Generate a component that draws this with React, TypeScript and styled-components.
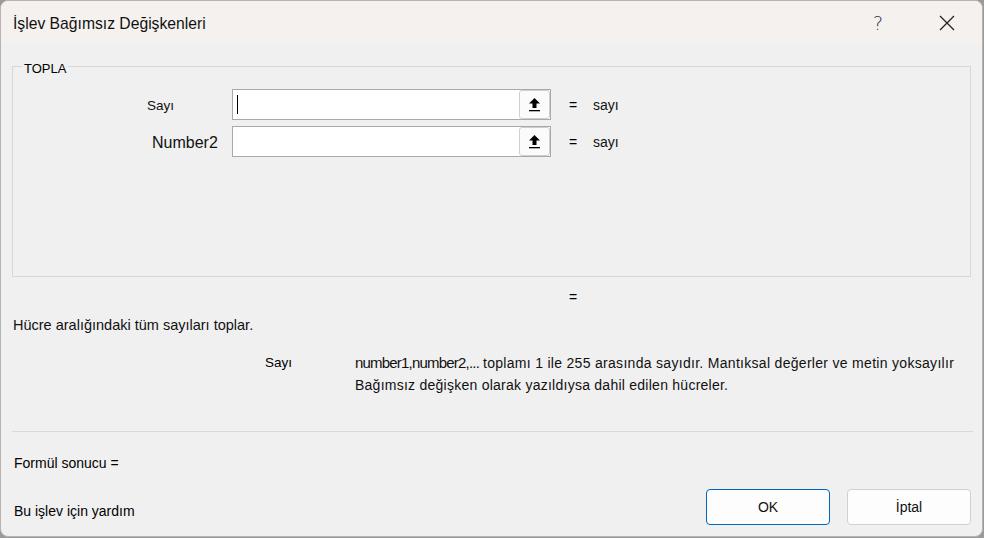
import React from "react";
import styled, { createGlobalStyle } from "styled-components";

const Global = createGlobalStyle`
  html, body { margin: 0; padding: 0; background: #9a9a9a; }
  body { width: 984px; height: 538px; overflow: hidden; font-family: "Liberation Sans", Arial, sans-serif; color: #000; }
  * { box-sizing: border-box; }
`;

const Dialog = styled.div`
  width: 983px;
  height: 537px;
  border: 1px solid #b4b4b4;
  border-radius: 8px;
  overflow: hidden;
  background: #f0f0f0;
  display: flex;
  flex-direction: column;
`;

const TitleBar = styled.div`
  height: 43px;
  flex: none;
  background: #f5f1ef;
  display: flex;
  align-items: center;
  padding-left: 12px;
`;

const Title = styled.div`
  font-size: 15.7px;
  color: #111;
  flex: 1;
  padding-top: 2px;
`;

const TitleButton = styled.div<{ $w: number }>`
  width: ${(p) => p.$w}px;
  height: 43px;
  display: flex;
  align-items: center;
  justify-content: center;
  color: #222;
`;

const Question = styled.span`
  font-family: "DejaVu Sans", sans-serif;
  font-weight: 300;
  font-size: 19px;
  color: #333;
  margin-right: 8px;
`;

const Body = styled.div`
  flex: 1;
  display: flex;
  flex-direction: column;
  padding: 0 11px 0 11px;
`;

const Group = styled.div`
  position: relative;
  margin-top: 22px;
  height: 211px;
  flex: none;
  border: 1px solid #d7d7d7;
  padding-top: 22px;
  display: flex;
  flex-direction: column;
  gap: 6px;
`;

const Legend = styled.span`
  position: absolute;
  top: -5px;
  left: 9px;
  padding: 0 2px;
  background: #f0f0f0;
  font-size: 13px;
  line-height: 13px;
`;

const ArgRow = styled.div`
  display: grid;
  grid-template-columns: 219px 319px 42px auto;
  align-items: center;
  height: 31px;
`;

const ArgLabel = styled.div<{ $pad: number; $size: number; $dy: number }>`
  padding-left: ${(p) => p.$pad}px;
  padding-top: ${(p) => p.$dy}px;
  font-size: ${(p) => p.$size}px;
  color: #111;
`;

const InputBox = styled.div`
  height: 31px;
  border: 1px solid #a9a9a9;
  background: #fff;
  display: flex;
  align-items: stretch;
  padding-left: 4px;
`;

const Field = styled.div`
  flex: 1;
  display: flex;
  align-items: center;
`;

const Caret = styled.div`
  width: 1px;
  height: 19px;
  background: #000;
`;

const RefButton = styled.div`
  width: 31px;
  border: 1px solid #cfcfcf;
  border-radius: 3px;
  background: #fbfbfb;
  display: flex;
  align-items: center;
  justify-content: center;
`;

const Eq = styled.div`
  font-size: 14px;
  padding-left: 18px;
`;

const Value = styled.div`
  font-size: 14px;
  color: #111;
`;

const EqRow = styled.div`
  height: 40px;
  flex: none;
  display: flex;
  align-items: center;
  padding-left: 557px;
  font-size: 14px;
`;

const Desc = styled.div`
  height: 16px;
  line-height: 16px;
  font-size: 14.5px;
  color: #111;
  padding-left: 1px;
`;

const ArgHelp = styled.div`
  margin-top: 19px;
  display: grid;
  grid-template-columns: 343px 1fr;
  line-height: 22px;
`;

const HelpLabel = styled.div`
  padding-left: 253px;
  font-size: 13.5px;
`;

const HelpText = styled.div`
  font-size: 14px;
  color: #111;
`;

const Piece = styled.span<{ $ls: number; $size?: number }>`
  letter-spacing: ${(p) => p.$ls}px;
  font-size: ${(p) => p.$size ?? 14}px;
`;

const Separator = styled.div`
  margin-top: 35px;
  height: 1px;
  flex: none;
  background: #d9d9d9;
  margin-right: -2px;
`;

const FormulaResult = styled.div`
  margin-top: 23px;
  height: 16px;
  line-height: 16px;
  font-size: 14px;
  padding-left: 2px;
`;

const Footer = styled.div`
  margin-top: 18px;
  display: flex;
  align-items: flex-start;
  gap: 17px;
`;

const HelpLink = styled.div`
  flex: 1;
  margin-top: 14px;
  line-height: 16px;
  font-size: 14px;
  padding-left: 2px;
`;

const Button = styled.button<{ $primary?: boolean }>`
  width: 124px;
  height: 36px;
  border: 1px solid ${(p) => (p.$primary ? "#0067c0" : "#d0d0d0")};
  border-radius: 4px;
  background: #fdfdfd;
  font-family: "Liberation Sans", Arial, sans-serif;
  font-size: 14px;
  color: #111;
  padding: 0;
`;

const RefIcon = () => (
  <svg width="13" height="15" viewBox="0 0 13 15">
    <path d="M6.5 1 L12 6.5 L8.5 6.5 L8.5 11 L4.5 11 L4.5 6.5 L1 6.5 Z" fill="#000" />
    <rect x="1" y="13" width="11" height="1.3" fill="#000" />
  </svg>
);

const CloseIcon = () => (
  <svg width="16" height="16" viewBox="0 0 16 16">
    <path d="M1 1 L15 15 M15 1 L1 15" stroke="#222" strokeWidth="1.3" />
  </svg>
);

const args = [
  { label: "Sayı", pad: 134, size: 13.5, dy: 1, caret: true },
  { label: "Number2", pad: 139, size: 16, dy: 3, caret: false },
];

export default function App() {
  return (
    <>
      <Global />
      <Dialog>
        <TitleBar>
          <Title>İşlev Bağımsız Değişkenleri</Title>
          <TitleButton $w={60}>
            <Question>?</Question>
          </TitleButton>
          <TitleButton $w={70}>
            <CloseIcon />
          </TitleButton>
        </TitleBar>
        <Body>
          <Group>
            <Legend>TOPLA</Legend>
            {args.map((a) => (
              <ArgRow key={a.label}>
                <ArgLabel $pad={a.pad} $size={a.size} $dy={a.dy}>
                  {a.label}
                </ArgLabel>
                <InputBox>
                  <Field>{a.caret && <Caret />}</Field>
                  <RefButton>
                    <RefIcon />
                  </RefButton>
                </InputBox>
                <Eq>=</Eq>
                <Value>sayı</Value>
              </ArgRow>
            ))}
          </Group>
          <EqRow>=</EqRow>
          <Desc>Hücre aralığındaki tüm sayıları toplar.</Desc>
          <ArgHelp>
            <HelpLabel>Sayı</HelpLabel>
            <HelpText>
              <Piece $ls={-0.8} $size={15}>number1,number2,...</Piece>{" "}
              <Piece $ls={0.3}>toplamı 1 ile 255 arasında sayıdır. Mantıksal değerler ve metin yoksayılır</Piece>
              <br />
              <Piece $ls={0.25}>Bağımsız değişken olarak yazıldıysa dahil edilen hücreler.</Piece>
            </HelpText>
          </ArgHelp>
          <Separator />
          <FormulaResult>Formül sonucu =</FormulaResult>
          <Footer>
            <HelpLink>Bu işlev için yardım</HelpLink>
            <Button $primary>OK</Button>
            <Button>İptal</Button>
          </Footer>
        </Body>
      </Dialog>
    </>
  );
}
